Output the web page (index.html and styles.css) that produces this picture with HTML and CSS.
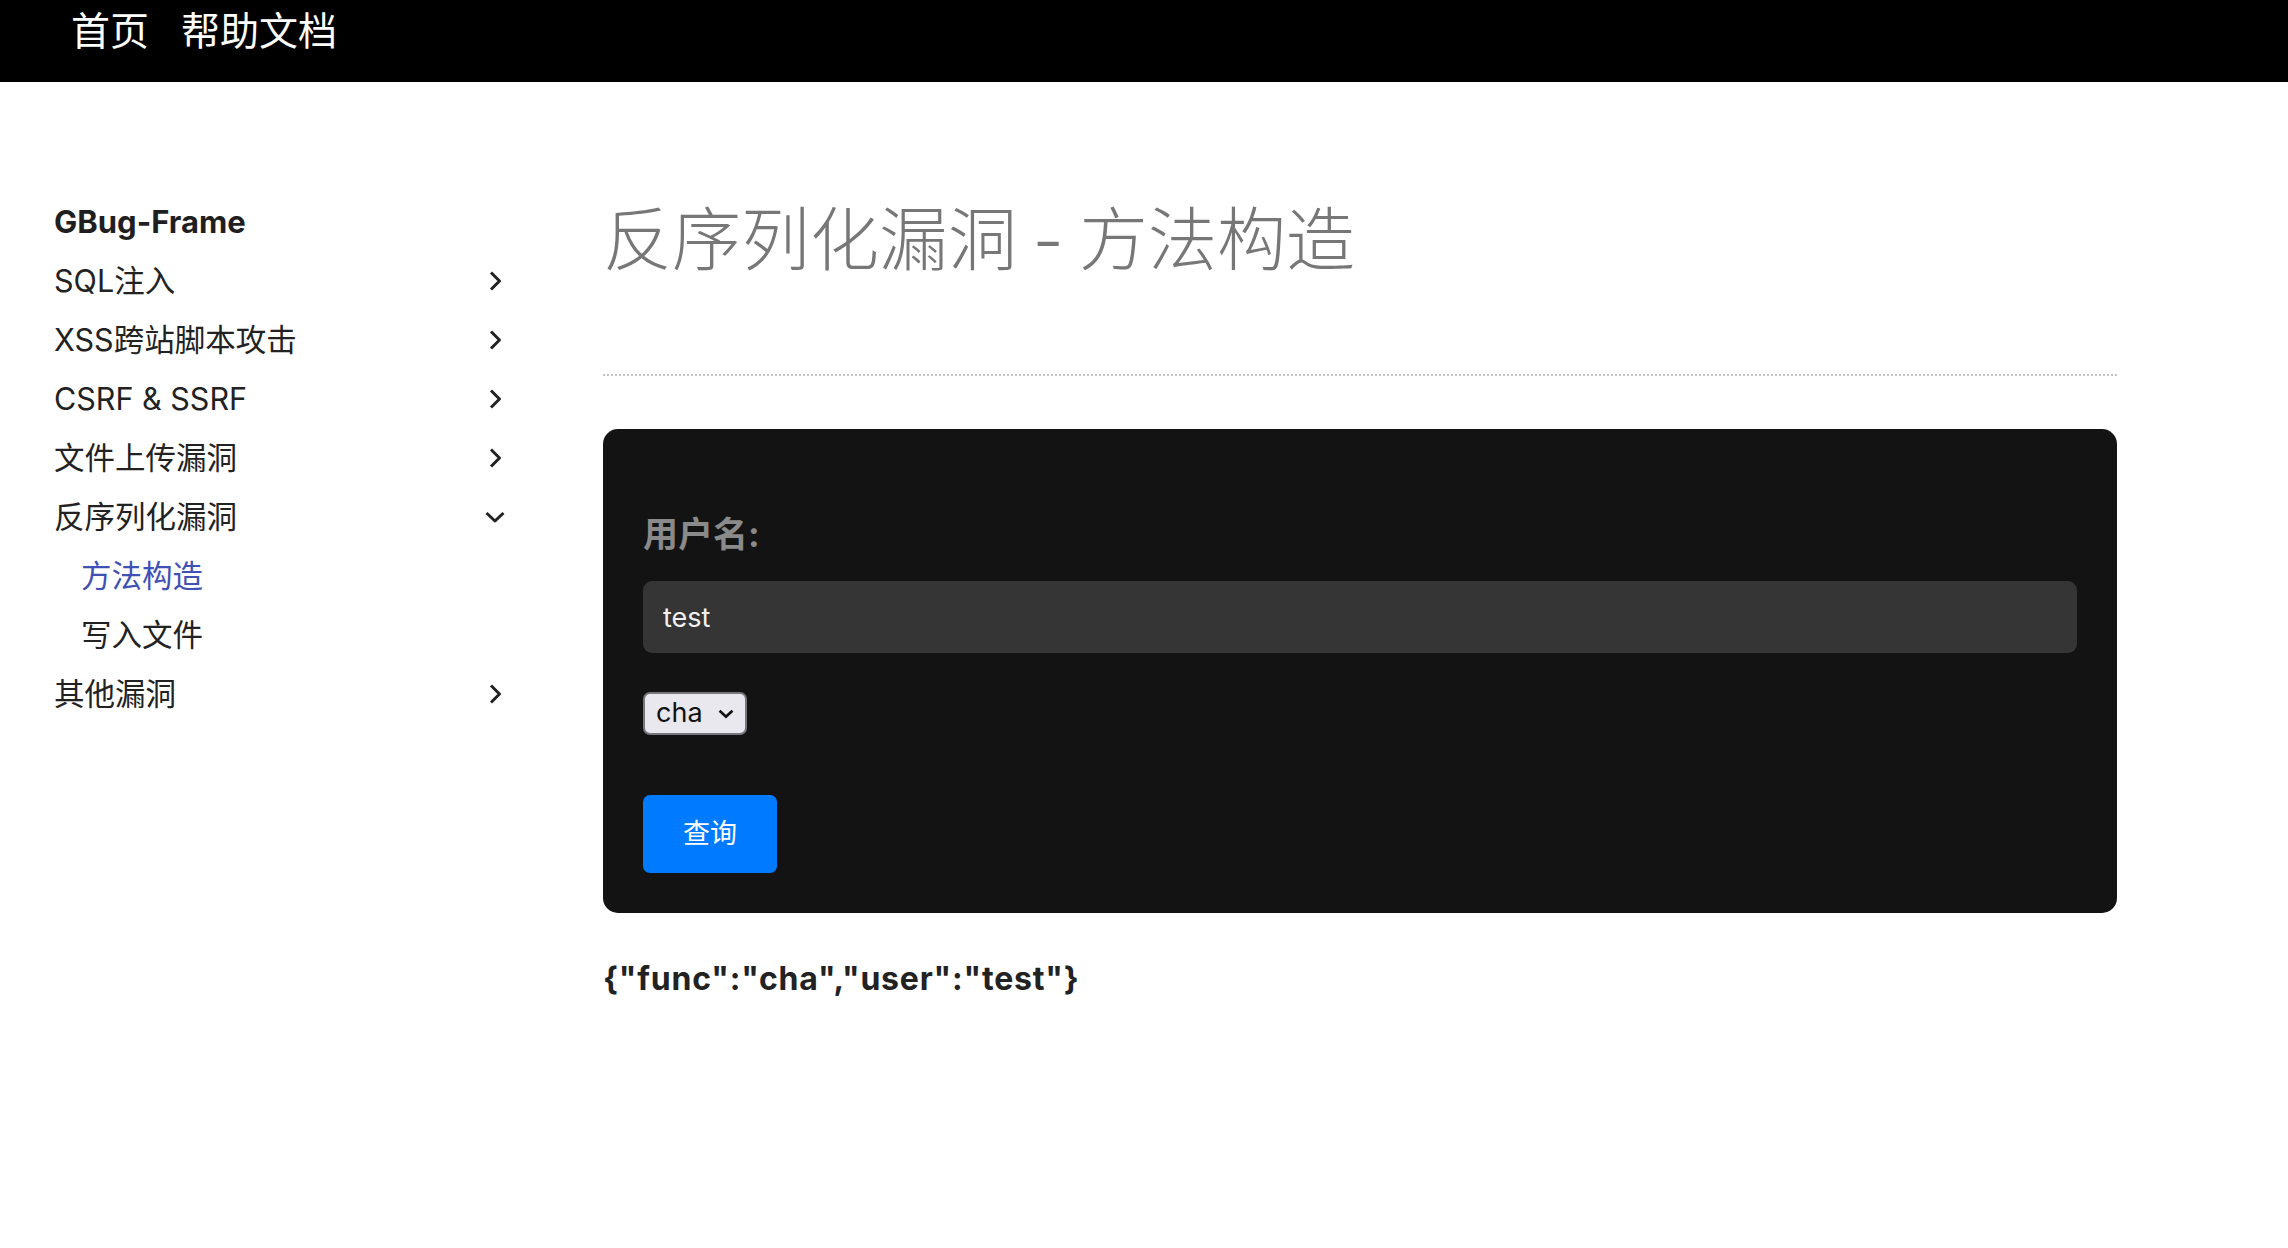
FILE: index.html
```html
<!DOCTYPE html>
<html lang="zh-CN">
<head>
<meta charset="utf-8">
<title>反序列化漏洞 - 方法构造</title>
<link rel="stylesheet" href="styles.css">
</head>
<body>
<header class="topbar">
  <nav class="topnav">
    <a class="topnav-link" href="#">首页</a>
    <a class="topnav-link" href="#">帮助文档</a>
  </nav>
</header>
<div class="layout">
  <aside class="sidebar">
    <div class="brand">GBug-Frame</div>
    <ul class="menu">
      <li class="menu-item"><span>SQL注入</span><svg class="chev" viewBox="0 0 20 20"><polyline points="6,1.5 14.5,10 6,18.5"/></svg></li>
      <li class="menu-item"><span>XSS跨站脚本攻击</span><svg class="chev" viewBox="0 0 20 20"><polyline points="6,1.5 14.5,10 6,18.5"/></svg></li>
      <li class="menu-item"><span>CSRF &amp; SSRF</span><svg class="chev" viewBox="0 0 20 20"><polyline points="6,1.5 14.5,10 6,18.5"/></svg></li>
      <li class="menu-item"><span>文件上传漏洞</span><svg class="chev" viewBox="0 0 20 20"><polyline points="6,1.5 14.5,10 6,18.5"/></svg></li>
      <li class="menu-item"><span>反序列化漏洞</span><svg class="chev" viewBox="0 0 20 20"><polyline points="1.5,6 10,14 18.5,6"/></svg></li>
      <li class="submenu-item active">方法构造</li>
      <li class="submenu-item">写入文件</li>
      <li class="menu-item"><span>其他漏洞</span><svg class="chev" viewBox="0 0 20 20"><polyline points="6,1.5 14.5,10 6,18.5"/></svg></li>
    </ul>
  </aside>
  <main class="content">
    <h1 class="page-title">反序列化漏洞 - 方法构造</h1>
    <hr class="divider">
    <form class="panel">
      <label class="field-label" for="user">用户名:</label>
      <input class="text-input" id="user" type="text" value="test">
      <div class="select-wrap">
        <select class="select"><option>cha</option></select>
        <svg class="select-arrow" viewBox="0 0 15 9"><polyline points="1.5,1.5 7.5,7 13.5,1.5"/></svg>
      </div>
      <button class="btn-primary" type="button">查询</button>
    </form>
    <p class="result">{"func":"cha","user":"test"}</p>
  </main>
</div>
</body>
</html>
```
FILE: styles.css
```css
* { box-sizing: border-box; }

body {
  margin: 0;
  background: #fff;
  font-family: "Inter", "Noto Sans CJK SC", sans-serif;
  color: #222;
}

.topbar {
  height: 82px;
  background: #000;
  padding: 12px 0 0 71px;
}

.topnav {
  display: flex;
  gap: 32px;
}

.topnav-link {
  font-size: 39px;
  line-height: 38px;
  color: #fff;
  text-decoration: none;
}

.layout {
  display: flex;
  padding-top: 110px;
}

.sidebar {
  flex: none;
  width: 505px;
  padding-left: 54px;
}

.brand {
  font-size: 31px;
  font-weight: 700;
  line-height: 59px;
  color: #1f1f1f;
}

.menu {
  list-style: none;
  margin: 0;
  padding: 0;
}

.menu-item {
  display: flex;
  justify-content: space-between;
  align-items: center;
  height: 59px;
  line-height: 59px;
  font-size: 30.5px;
  color: #222;
}

.submenu-item {
  height: 59px;
  line-height: 59px;
  padding-left: 27px;
  font-size: 30.5px;
  color: #222;
}

.submenu-item.active {
  color: #3f51b5;
}

.chev {
  width: 20px;
  height: 20px;
  fill: none;
  stroke: #222;
  stroke-width: 3;
  stroke-linejoin: round;
}

.content {
  flex: none;
  width: 1514px;
  margin-left: 98px;
}

.page-title {
  margin: 7px 0 0;
  font-size: 69px;
  line-height: 83px;
  font-weight: 300;
  color: #777;
  word-spacing: -4px;
}

.divider {
  margin: 92px 0 0;
  height: 0;
  border: 0;
  border-top: 2px dotted #c4c4c4;
}

.panel {
  margin-top: 53px;
  background: #131313;
  border-radius: 15px;
  padding: 79px 40px 40px;
  display: flex;
  flex-direction: column;
  align-items: flex-start;
}

.field-label {
  font-size: 35px;
  font-weight: 700;
  line-height: 52px;
  color: #8a8a8a;
}

.text-input {
  margin-top: 21px;
  width: 100%;
  height: 72px;
  background: #353535;
  border: none;
  border-radius: 9px;
  padding: 0 20px;
  font-family: inherit;
  font-size: 27px;
  color: #f2f2f2;
  outline: none;
}

.select-wrap {
  margin-top: 39px;
  position: relative;
  width: 104px;
  height: 43px;
}

.select {
  appearance: none;
  -webkit-appearance: none;
  width: 104px;
  height: 43px;
  background: #e9e8ee;
  border: 2px solid #78777f;
  border-radius: 7px;
  padding: 0 0 2px 11px;
  font-family: inherit;
  font-size: 27px;
  color: #111;
}

.select-arrow {
  position: absolute;
  right: 13px;
  top: 17px;
  width: 16px;
  height: 10px;
  fill: none;
  stroke: #111;
  stroke-width: 2.6;
  pointer-events: none;
}

.btn-primary {
  margin-top: 60px;
  width: 134px;
  height: 78px;
  padding: 0 0 5px;
  background: #007bff;
  border: none;
  border-radius: 7px;
  font-family: inherit;
  font-size: 27px;
  color: #fff;
}

.result {
  margin: 43px 0 0;
  font-size: 32px;
  font-weight: 700;
  line-height: 45px;
  letter-spacing: 0.8px;
  color: #222;
}
```
